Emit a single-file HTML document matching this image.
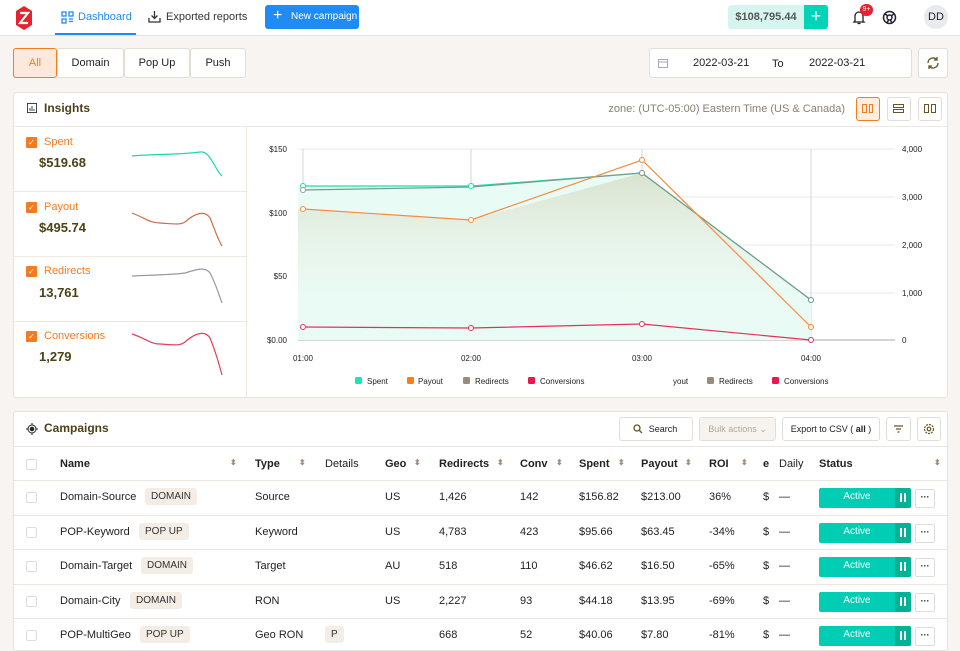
<!DOCTYPE html>
<html><head><meta charset="utf-8"><style>
*{box-sizing:border-box;margin:0;padding:0}
body{width:960px;height:640px;overflow:hidden;background:#f7f4f1;font-family:"Liberation Sans",sans-serif;font-size:11px;color:#222;position:relative;white-space:nowrap}
.hdr{position:absolute;left:0;top:0;width:960px;height:36px;background:#fff;border-bottom:1px solid #dfe3ea}
.abs{position:absolute;white-space:nowrap}
.btn{position:absolute;background:#fff;border:1px solid #e2ddd6;border-radius:3px}
.card{position:absolute;background:#fff;border:1px solid #e8e2db;border-radius:3px}
.cb{position:absolute;width:11px;height:11px;border:1px solid #ddd;border-radius:2px;background:#fff}
.ocb{position:absolute;width:11px;height:11px;background:#f47b20;border-radius:1px;color:#fff;font-size:8px;line-height:11px;text-align:center}
.tag{position:absolute;background:#f3ede6;border-radius:3px;font-size:10px;color:#333;padding:0 6px;height:17px;line-height:17px;white-space:nowrap}
.act{position:absolute;left:819px;width:92px;height:20px;background:#00cdb3;border-radius:2px;color:#fff;font-size:10px;line-height:18px}
.act span{position:absolute;left:0;width:76px;text-align:center}
.act i{position:absolute;top:5px;width:2px;height:9px;background:#fff}
.act b{position:absolute;right:0;top:0;width:16px;height:20px;background:#00b394;border-radius:0 2px 2px 0}
.more{position:absolute;left:915px;width:20px;height:19px;border:1px solid #ddd;border-radius:2px;background:#fff;font-size:9px;text-align:center;line-height:14px;font-weight:bold}
.row{position:absolute;left:14px;width:933px;height:1px;background:#ece6df}
</style></head><body>
<div class="hdr">
<svg class="abs" style="left:14px;top:5px" width="20" height="26" viewBox="0 0 20 26"><path d="M10 1 L18 6 V20 L10 25 L2 20 V6 Z" fill="#e8202f"/><path d="M6 8 H14 L6 18 H14" stroke="#fff" stroke-width="2.2" fill="none"/></svg>
<svg class="abs" style="left:61px;top:11px" width="13" height="13" viewBox="0 0 13 13" fill="none" stroke="#1f8bf5" stroke-width="1.3"><rect x="1" y="1" width="4" height="4"/><rect x="1" y="8" width="4" height="4"/><rect x="8" y="1" width="4" height="4"/><path d="M8 8h4M8 10.5h4"/></svg>
<div class="abs" style="left:78px;top:11px;font-size:11px;color:#1f8bf5">Dashboard</div>
<div class="abs" style="left:55px;top:33px;width:81px;height:2px;background:#1f8bf5"></div>
<svg class="abs" style="left:148px;top:10px" width="13" height="13" viewBox="0 0 13 13" fill="none" stroke="#333" stroke-width="1.3"><path d="M6.5 1v7M3.5 5.5l3 3 3-3M1 8v4h11V8"/></svg>
<div class="abs" style="left:166px;top:11px;color:#333">Exported reports</div>
<div class="abs" style="left:265px;top:5px;width:94px;height:24px;background:#1f8bf5;border-radius:3px;color:#fff;font-size:10px;line-height:24px;padding-left:26px">New campaign</div>
<div class="abs" style="left:273px;top:8px;color:#fff;font-size:16px;line-height:16px">+</div>
<div class="abs" style="left:728px;top:5px;width:76px;height:24px;background:#d6f5ef;border-radius:3px 0 0 3px;font-size:11px;font-weight:bold;color:#555;line-height:24px;text-align:center">$108,795.44</div>
<div class="abs" style="left:804px;top:5px;width:24px;height:24px;background:#00d4b8;border-radius:0 3px 3px 0;color:#fff;font-size:18px;line-height:23px;text-align:center">+</div>
<svg class="abs" style="left:852px;top:10px" width="14" height="15" viewBox="0 0 14 15" fill="none" stroke="#222" stroke-width="1.3"><path d="M3 11V6a4 4 0 0 1 8 0v5l1 1H2zM5.5 13.5h3"/></svg>
<div class="abs" style="left:860px;top:4px;width:13px;height:12px;background:#e8202f;border-radius:6px;color:#fff;font-size:7px;line-height:12px;text-align:center">9+</div>
<svg class="abs" style="left:882px;top:10px" width="15" height="15" viewBox="0 0 15 15" fill="none" stroke="#223" stroke-width="1.5"><circle cx="7.5" cy="7.5" r="6"/><circle cx="7.5" cy="7.5" r="2.5"/><path d="M3 4l3 2M12 4l-3 2M5 13l1.5-3M10 13l-1.5-3"/></svg>
<div class="abs" style="left:924px;top:5px;width:24px;height:24px;border-radius:12px;background:#e8eaef;font-size:11px;line-height:24px;text-align:center;color:#222">DD</div>
</div>

<div class="btn" style="left:13px;top:48px;width:44px;height:30px;background:#fde9dc;border-color:#f47b20;color:#f47b20;text-align:center;line-height:28px">All</div>
<div class="btn" style="left:57px;top:48px;width:67px;height:30px;text-align:center;line-height:28px">Domain</div>
<div class="btn" style="left:124px;top:48px;width:66px;height:30px;text-align:center;line-height:28px">Pop Up</div>
<div class="btn" style="left:190px;top:48px;width:56px;height:30px;text-align:center;line-height:28px">Push</div>

<div class="btn" style="left:649px;top:48px;width:263px;height:30px"></div>
<svg class="abs" style="left:658px;top:58px" width="10" height="10" viewBox="0 0 10 10" fill="none" stroke="#aaa"><rect x="0.5" y="1.5" width="9" height="8"/><path d="M0.5 4h9"/></svg>
<div class="abs" style="left:693px;top:57px">2022-03-21</div>
<div class="abs" style="left:772px;top:58px">To</div>
<div class="abs" style="left:809px;top:57px">2022-03-21</div>
<div class="btn" style="left:918px;top:48px;width:30px;height:30px"></div>
<svg class="abs" style="left:926px;top:56px" width="14" height="14" viewBox="0 0 14 14" fill="none" stroke="#665522" stroke-width="1.3"><path d="M2 7a5 5 0 0 1 9-3M12 7a5 5 0 0 1-9 3M11 1v3H8M3 13v-3h3"/></svg>

<div class="card" style="left:13px;top:92px;width:935px;height:306px"></div>
<div class="abs" style="left:14px;top:126px;width:933px;height:1px;background:#efe9e3"></div>
<svg class="abs" style="left:27px;top:103px" width="10" height="10" viewBox="0 0 10 10"><rect x="0.5" y="0.5" width="9" height="9" fill="none" stroke="#444"/><path d="M3 8V5M5 8V3M7 8V6" stroke="#444"/></svg>
<div class="abs" style="left:44px;top:101px;font-size:12px;font-weight:bold;color:#4d4216">Insights</div>
<div class="abs" style="left:608px;top:103px;width:237px;overflow:hidden;direction:rtl;color:#8a7f72;font-size:11px"><span style="direction:ltr;unicode-bidi:embed">Timezone: (UTC-05:00) Eastern Time (US &amp; Canada)</span></div>
<div class="btn" style="left:856px;top:97px;width:24px;height:24px;background:#fdeee2;border-color:#f47b20"></div>
<div class="abs" style="left:862px;top:104px;width:5px;height:9px;border:1.5px solid #f47b20"></div><div class="abs" style="left:869px;top:104px;width:4px;height:9px;border:1.5px solid #f47b20"></div>
<div class="btn" style="left:887px;top:97px;width:24px;height:24px"></div>
<div class="abs" style="left:893px;top:104px;width:11px;height:4px;border:1.5px solid #665522"></div><div class="abs" style="left:893px;top:109px;width:11px;height:4px;border:1.5px solid #665522"></div>
<div class="btn" style="left:918px;top:97px;width:24px;height:24px"></div>
<div class="abs" style="left:924px;top:104px;width:5px;height:9px;border:1.5px solid #665522"></div><div class="abs" style="left:931px;top:104px;width:5px;height:9px;border:1.5px solid #665522"></div>

<div class="abs" style="left:246px;top:127px;width:1px;height:270px;background:#efe9e3"></div>
<div class="abs" style="left:14px;top:191px;width:232px;height:1px;background:#efe9e3"></div>
<div class="abs" style="left:14px;top:256px;width:232px;height:1px;background:#efe9e3"></div>
<div class="abs" style="left:14px;top:321px;width:232px;height:1px;background:#efe9e3"></div>

<div class="ocb" style="left:26px;top:137px">✓</div><div class="abs" style="left:44px;top:136px;color:#f47b20">Spent</div><div class="abs" style="left:39px;top:155px;font-size:13px;font-weight:bold;color:#4d4216">$519.68</div>
<div class="ocb" style="left:26px;top:202px">✓</div><div class="abs" style="left:44px;top:201px;color:#f47b20">Payout</div><div class="abs" style="left:39px;top:220px;font-size:13px;font-weight:bold;color:#4d4216">$495.74</div>
<div class="ocb" style="left:26px;top:266px">✓</div><div class="abs" style="left:44px;top:265px;color:#f47b20">Redirects</div><div class="abs" style="left:39px;top:285px;font-size:13px;font-weight:bold;color:#4d4216">13,761</div>
<div class="ocb" style="left:26px;top:331px">✓</div><div class="abs" style="left:44px;top:330px;color:#f47b20">Conversions</div><div class="abs" style="left:39px;top:349px;font-size:13px;font-weight:bold;color:#4d4216">1,279</div>

<svg class="abs" style="left:0;top:0" width="960" height="400" fill="none" stroke-width="1.2">
<path d="M132 156 C150 154 180 155 200 152 C210 150 215 170 222 176" stroke="#1fd6b0"/>
<path d="M132 213 C145 218 150 223 160 223 C175 224 180 225 185 222 C195 213 205 210 210 218 C215 230 218 240 222 246" stroke="#c8704a"/>
<path d="M132 276 C150 275 170 275 185 273 C195 270 205 266 210 273 C215 282 218 292 222 303" stroke="#999"/>
<path d="M132 334 C145 338 150 344 160 344 C175 345 180 346 185 342 C195 333 205 330 210 338 C215 350 218 360 222 375" stroke="#e0405a"/>
<defs><linearGradient id="g" x1="0" y1="0" x2="0" y2="1"><stop offset="0" stop-color="#d4dcc4" stop-opacity=".8"/><stop offset="1" stop-color="#fff" stop-opacity="0"/></linearGradient></defs>
<g stroke="#eee"><path d="M298 149H895M298 197H895M298 245H895M298 293H895"/></g>
<g stroke="#ddd"><path d="M303 149V340M471 149V340M642 149V340M811 149V340"/></g>
<path d="M298 340H895" stroke="#bbb"/>
<path d="M298 186 L303 186 L471 186 L642 173 L811 300 L811 340 L298 340Z" fill="#e8fbf5" stroke="none"/>
<path d="M298 209 L303 209 L471 220 L642 173 L811 300 L811 340 L298 340Z" fill="url(#g)" stroke="none"/>
<path d="M303 186 L471 186 L642 173 L811 300" stroke="#18e0b8"/>
<path d="M303 190 L471 187 L642 173 L811 300" stroke="#7a9c8a"/>
<path d="M303 209 L471 220 L642 160 L811 327" stroke="#f88b3c"/>
<path d="M303 327 L471 328 L642 324 L811 340" stroke="#e6305a"/>
<g fill="#fff" stroke-width="1"><circle cx="303" cy="186" r="2.5" stroke="#18e0b8"/><circle cx="471" cy="186" r="2.5" stroke="#18e0b8"/><circle cx="303" cy="190" r="2.5" stroke="#999"/><circle cx="642" cy="173" r="2.5" stroke="#888"/><circle cx="811" cy="300" r="2.5" stroke="#5a9c8a"/>
<circle cx="303" cy="209" r="2.5" stroke="#f88b3c"/><circle cx="471" cy="220" r="2.5" stroke="#f88b3c"/><circle cx="642" cy="160" r="2.5" stroke="#f88b3c"/><circle cx="811" cy="327" r="2.5" stroke="#f88b3c"/>
<circle cx="303" cy="327" r="2.5" stroke="#e6305a"/><circle cx="471" cy="328" r="2.5" stroke="#e6305a"/><circle cx="642" cy="324" r="2.5" stroke="#e6305a"/><circle cx="811" cy="340" r="2.5" stroke="#e6305a"/></g>
<g font-size="8" fill="#222" stroke="none" font-family="Liberation Sans"><text x="287" y="152" text-anchor="end">$150</text><text x="287" y="216" text-anchor="end">$100</text><text x="287" y="279" text-anchor="end">$50</text><text x="287" y="343" text-anchor="end">$0.00</text>
<text x="902" y="152">4,000</text><text x="902" y="200">3,000</text><text x="902" y="248">2,000</text><text x="902" y="296">1,000</text><text x="902" y="343">0</text>
<text x="303" y="361" text-anchor="middle">01:00</text><text x="471" y="361" text-anchor="middle">02:00</text><text x="642" y="361" text-anchor="middle">03:00</text><text x="811" y="361" text-anchor="middle">04:00</text>
<text x="367" y="384">Spent</text><text x="418" y="384">Payout</text><text x="475" y="384">Redirects</text><text x="540" y="384">Conversions</text><text x="673" y="384">yout</text><text x="719" y="384">Redirects</text><text x="784" y="384">Conversions</text></g>
<g stroke="none"><rect x="355" y="377" width="7" height="7" rx="1.5" fill="#19e6b8"/><rect x="407" y="377" width="7" height="7" rx="1.5" fill="#fb7d16"/><rect x="463" y="377" width="7" height="7" rx="1.5" fill="#9a8a7a"/><rect x="528" y="377" width="7" height="7" rx="1.5" fill="#e6184c"/><rect x="707" y="377" width="7" height="7" rx="1.5" fill="#9a8a7a"/><rect x="772" y="377" width="7" height="7" rx="1.5" fill="#e6184c"/></g>
</svg>

<div class="card" style="left:13px;top:411px;width:935px;height:240px"></div>
<svg class="abs" style="left:26px;top:423px" width="12" height="12" viewBox="0 0 12 12" fill="none" stroke="#222"><circle cx="6" cy="6" r="4"/><circle cx="6" cy="6" r="1.8" fill="#222"/><path d="M6 0v2M6 10v2M0 6h2M10 6h2"/></svg>
<div class="abs" style="left:44px;top:421px;font-size:12px;font-weight:bold;color:#4d4216">Campaigns</div>
<div class="btn" style="left:619px;top:417px;width:74px;height:24px;text-align:center;line-height:22px;font-size:9px;padding-left:14px">Search</div>
<svg class="abs" style="left:633px;top:424px" width="10" height="10" fill="none" stroke="#665522" stroke-width="1.3"><circle cx="4" cy="4" r="3"/><path d="M6.5 6.5L9 9"/></svg>
<div class="btn" style="left:699px;top:417px;width:77px;height:24px;background:#f7f4f0;color:#b0a698;text-align:center;line-height:22px;font-size:9px">Bulk actions ⌄</div>
<div class="btn" style="left:782px;top:417px;width:98px;height:24px;text-align:center;line-height:22px;font-size:9px">Export to CSV ( <b>all</b> )</div>
<div class="btn" style="left:886px;top:417px;width:25px;height:24px"></div>
<svg class="abs" style="left:893px;top:424px" width="11" height="10" stroke="#665522" stroke-width="1.2"><path d="M1 2h9M3 5h5M4.5 8h2"/></svg>
<div class="btn" style="left:917px;top:417px;width:24px;height:24px"></div>
<svg class="abs" style="left:923px;top:423px" width="12" height="12" fill="none" stroke="#665522" stroke-width="1.2"><circle cx="6" cy="6" r="4.5" stroke-dasharray="2 1"/><circle cx="6" cy="6" r="1.8"/></svg>

<div class="row" style="top:446px"></div>
<div class="row" style="top:480px"></div>
<div class="row" style="top:515px"></div>
<div class="row" style="top:549px"></div>
<div class="row" style="top:584px"></div>
<div class="row" style="top:618px"></div>

<div style="position:absolute;top:458px;left:0;font-weight:bold;font-size:11px">
<div class="cb" style="left:26px;top:1px"></div>
<span class="abs" style="left:60px">Name</span><span class="abs" style="left:230px;color:#a09080;font-size:8px">⬍</span>
<span class="abs" style="left:255px">Type</span><span class="abs" style="left:299px;color:#a09080;font-size:8px">⬍</span>
<span class="abs" style="left:325px;font-weight:normal">Details</span>
<span class="abs" style="left:385px">Geo</span><span class="abs" style="left:414px;color:#a09080;font-size:8px">⬍</span>
<span class="abs" style="left:439px">Redirects</span><span class="abs" style="left:497px;color:#a09080;font-size:8px">⬍</span>
<span class="abs" style="left:520px">Conv</span><span class="abs" style="left:556px;color:#a09080;font-size:8px">⬍</span>
<span class="abs" style="left:579px">Spent</span><span class="abs" style="left:618px;color:#a09080;font-size:8px">⬍</span>
<span class="abs" style="left:641px">Payout</span><span class="abs" style="left:685px;color:#a09080;font-size:8px">⬍</span>
<span class="abs" style="left:709px">ROI</span><span class="abs" style="left:741px;color:#a09080;font-size:8px">⬍</span>
<span class="abs" style="left:763px">e</span><span class="abs" style="left:779px;font-weight:normal">Daily</span>
<span class="abs" style="left:819px">Status</span><span class="abs" style="left:934px;color:#a09080;font-size:8px">⬍</span>
</div>

<div style="position:absolute;left:0;top:491px">
<div class="cb" style="left:26px;top:1px"></div><span class="abs" style="left:60px">Domain-Source</span><div class="tag" style="left:145px;top:-3px">DOMAIN</div><span class="abs" style="left:255px">Source</span><span class="abs" style="left:385px">US</span><span class="abs" style="left:439px">1,426</span><span class="abs" style="left:520px">142</span><span class="abs" style="left:579px">$156.82</span><span class="abs" style="left:641px">$213.00</span><span class="abs" style="left:709px">36%</span><span class="abs" style="left:763px">$</span><span class="abs" style="left:779px">—</span>
<div class="act" style="top:-3px"><span>Active</span><b><i style="left:5px"></i><i style="left:9px"></i></b></div><div class="more" style="top:-2px">···</div></div>
<div style="position:absolute;left:0;top:526px">
<div class="cb" style="left:26px;top:1px"></div><span class="abs" style="left:60px">POP-Keyword</span><div class="tag" style="left:139px;top:-3px">POP UP</div><span class="abs" style="left:255px">Keyword</span><span class="abs" style="left:385px">US</span><span class="abs" style="left:439px">4,783</span><span class="abs" style="left:520px">423</span><span class="abs" style="left:579px">$95.66</span><span class="abs" style="left:641px">$63.45</span><span class="abs" style="left:709px">-34%</span><span class="abs" style="left:763px">$</span><span class="abs" style="left:779px">—</span>
<div class="act" style="top:-3px"><span>Active</span><b><i style="left:5px"></i><i style="left:9px"></i></b></div><div class="more" style="top:-2px">···</div></div>
<div style="position:absolute;left:0;top:560px">
<div class="cb" style="left:26px;top:1px"></div><span class="abs" style="left:60px">Domain-Target</span><div class="tag" style="left:141px;top:-3px">DOMAIN</div><span class="abs" style="left:255px">Target</span><span class="abs" style="left:385px">AU</span><span class="abs" style="left:439px">518</span><span class="abs" style="left:520px">110</span><span class="abs" style="left:579px">$46.62</span><span class="abs" style="left:641px">$16.50</span><span class="abs" style="left:709px">-65%</span><span class="abs" style="left:763px">$</span><span class="abs" style="left:779px">—</span>
<div class="act" style="top:-3px"><span>Active</span><b><i style="left:5px"></i><i style="left:9px"></i></b></div><div class="more" style="top:-2px">···</div></div>
<div style="position:absolute;left:0;top:595px">
<div class="cb" style="left:26px;top:1px"></div><span class="abs" style="left:60px">Domain-City</span><div class="tag" style="left:130px;top:-3px">DOMAIN</div><span class="abs" style="left:255px">RON</span><span class="abs" style="left:385px">US</span><span class="abs" style="left:439px">2,227</span><span class="abs" style="left:520px">93</span><span class="abs" style="left:579px">$44.18</span><span class="abs" style="left:641px">$13.95</span><span class="abs" style="left:709px">-69%</span><span class="abs" style="left:763px">$</span><span class="abs" style="left:779px">—</span>
<div class="act" style="top:-3px"><span>Active</span><b><i style="left:5px"></i><i style="left:9px"></i></b></div><div class="more" style="top:-2px">···</div></div>
<div style="position:absolute;left:0;top:629px">
<div class="cb" style="left:26px;top:1px"></div><span class="abs" style="left:60px">POP-MultiGeo</span><div class="tag" style="left:140px;top:-3px">POP UP</div><span class="abs" style="left:255px">Geo RON</span><div class="tag" style="left:325px;top:-3px">P</div><span class="abs" style="left:439px">668</span><span class="abs" style="left:520px">52</span><span class="abs" style="left:579px">$40.06</span><span class="abs" style="left:641px">$7.80</span><span class="abs" style="left:709px">-81%</span><span class="abs" style="left:763px">$</span><span class="abs" style="left:779px">—</span>
<div class="act" style="top:-3px"><span>Active</span><b><i style="left:5px"></i><i style="left:9px"></i></b></div><div class="more" style="top:-2px">···</div></div>
</body></html>
